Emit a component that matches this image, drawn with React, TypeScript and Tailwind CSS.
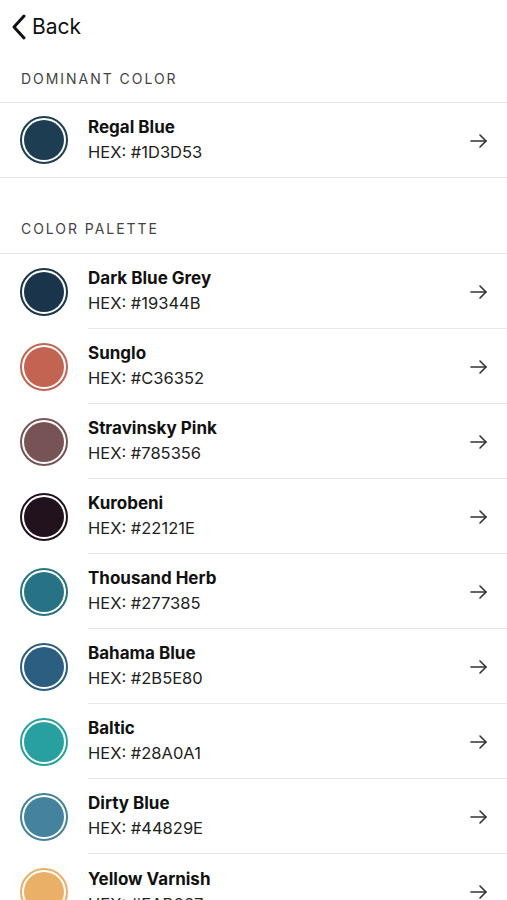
import React from "react";

type Swatch = { name: string; hex: string };

const dominant: Swatch = { name: "Regal Blue", hex: "#1D3D53" };

const palette: Swatch[] = [
  { name: "Dark Blue Grey", hex: "#19344B" },
  { name: "Sunglo", hex: "#C36352" },
  { name: "Stravinsky Pink", hex: "#785356" },
  { name: "Kurobeni", hex: "#22121E" },
  { name: "Thousand Herb", hex: "#277385" },
  { name: "Bahama Blue", hex: "#2B5E80" },
  { name: "Baltic", hex: "#28A0A1" },
  { name: "Dirty Blue", hex: "#44829E" },
  { name: "Yellow Varnish", hex: "#EAB067" },
];

function Arrow() {
  return (
    <svg width="20" height="16" viewBox="0 0 20 16" fill="none" stroke="#333" strokeWidth="1.6" strokeLinecap="round" strokeLinejoin="round">
      <path d="M2 8h15" />
      <path d="M11 2l6 6-6 6" />
    </svg>
  );
}

function ColorRow({ item, last, h = "h-[75px]" }: { item: Swatch; last?: boolean; h?: string }) {
  return (
    <div className={`flex ${h} items-stretch`}>
      <div className="flex w-[88px] shrink-0 items-center pl-5">
        <div
          className="flex h-[48px] w-[48px] items-center justify-center rounded-full border-2 bg-white"
          style={{ borderColor: item.hex }}
        >
          <div className="h-[40px] w-[40px] rounded-full" style={{ backgroundColor: item.hex }} />
        </div>
      </div>
      <div className={`flex flex-1 items-center ${last ? "" : "border-b border-[#e8e8e8]"}`}>
        <div className="flex-1">
          <p className="text-[17px] font-bold leading-[24px] text-[#111]">{item.name}</p>
          <p className="text-[16.5px] leading-[26px] text-[#222]">HEX: {item.hex}</p>
        </div>
        <div className="pr-[18px] pt-[1px]">
          <Arrow />
        </div>
      </div>
    </div>
  );
}

export default function App() {
  return (
    <div className="min-h-[900px] bg-white" style={{ fontFamily: "Inter, 'Liberation Sans', sans-serif" }}>
      <div className="flex h-[54px] items-center pl-[11px]">
        <svg width="18" height="26" viewBox="0 0 18 26" fill="none" stroke="#111" strokeWidth="3" strokeLinecap="round" strokeLinejoin="round">
          <path d="M13 2L3 13l10 11" />
        </svg>
        <span className="ml-[3px] text-[21px] text-[#111]">Back</span>
      </div>
      <div className="flex h-[48px] items-center pl-[21px] pt-[1px] text-[14px] tracking-[0.14em] text-[#444]">
        DOMINANT COLOR
      </div>
      <div className="border-y border-[#e8e8e8]">
        <ColorRow item={dominant} last h="h-[74px]" />
      </div>
      <div className="flex h-[75px] items-end pb-[14px] pl-[21px] text-[14px] tracking-[0.14em] text-[#444]">
        COLOR PALETTE
      </div>
      <div className="border-t border-[#e8e8e8]">
        {palette.map((p, i) => (
          <ColorRow key={p.hex} item={p} last={i === palette.length - 1} />
        ))}
      </div>
    </div>
  );
}
